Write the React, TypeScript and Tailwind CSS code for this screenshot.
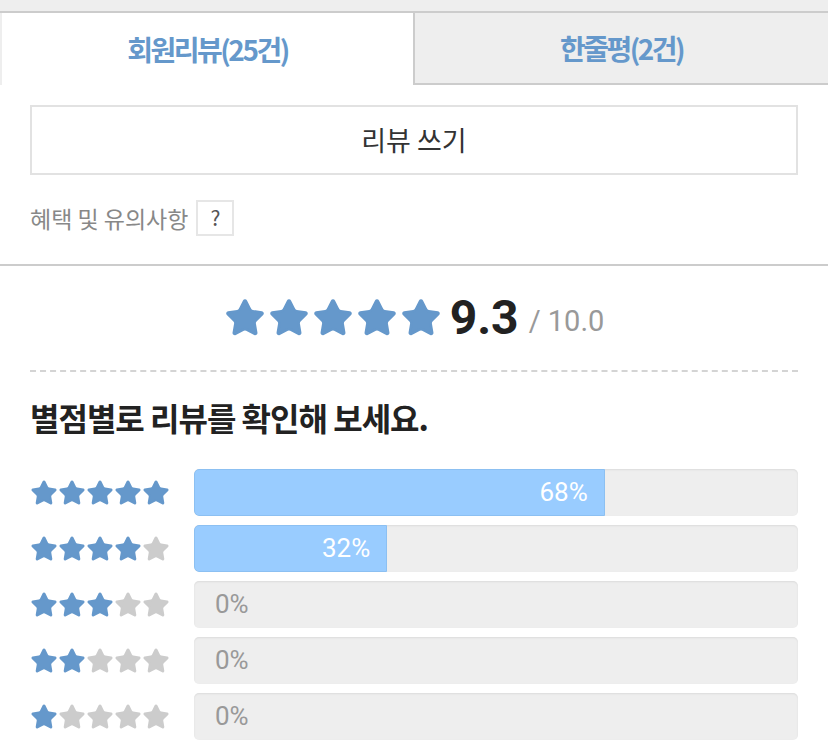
import { Star } from 'lucide-react';

const FONT = '"Noto Sans CJK KR", "Noto Sans", Roboto, sans-serif';

const rows = [
  { stars: 5, pct: 68 },
  { stars: 4, pct: 32 },
  { stars: 3, pct: 0 },
  { stars: 2, pct: 0 },
  { stars: 1, pct: 0 },
];

function StarIcon({ on, size }: { on: boolean; size: number }) {
  const color = on ? '#6598cb' : '#cccccc';
  return <Star width={size} height={size} fill={color} color={color} strokeWidth={1.5} />;
}

export default function App() {
  return (
    <div className="w-[828px] bg-white" style={{ fontFamily: FONT }}>
      <div className="h-[11px] bg-[#eeeeee]" />
      <div className="flex border-t-2 border-[#cccccc]">
        <div className="flex h-[72px] w-[413px] items-center justify-center border-l-2 border-[#eeeeee] bg-white">
          <span className="text-[28px] font-bold tracking-[-2.5px] text-[#6598cb]">회원리뷰(25건)</span>
        </div>
        <div className="flex h-[72px] flex-1 items-center justify-center border-b-2 border-l-2 border-[#cccccc] bg-[#eeeeee]">
          <span className="text-[28px] font-bold tracking-[-2.5px] text-[#6598cb]">한줄평(2건)</span>
        </div>
      </div>

      <div className="px-[30px] pt-[20px]">
        <button className="flex h-[70px] w-full items-center justify-center border-2 border-[#e2e2e2] bg-white text-[27px] text-[#333333]">
          리뷰 쓰기
        </button>
        <div className="mt-[25px] flex h-[36px] items-center gap-[8px]">
          <span className="text-[23px] text-[#888888]">혜택 및 유의사항</span>
          <span className="flex h-[36px] w-[38px] items-center justify-center border-2 border-[#e6e6e6] text-[21px] text-[#555555]">?</span>
        </div>
      </div>

      <div className="mt-[28px] border-t-2 border-[#cccccc]" />

      <div className="px-[30px]">
        <div className="flex h-[104px] items-center justify-center">
          <div className="flex gap-[2px]">
            {[0, 1, 2, 3, 4].map((i) => (
              <StarIcon key={i} on size={42} />
            ))}
          </div>
          <span className="ml-[8px] text-[48px] font-bold text-[#222222]" style={{ fontFamily: 'Roboto, sans-serif' }}>9.3</span>
          <span className="ml-[10px] mt-[8px] text-[29px] text-[#999999]" style={{ fontFamily: 'Roboto, sans-serif' }}>/ 10.0</span>
        </div>
        <div className="border-t-2 border-dashed border-[#d4d4d4]" />
        <h2 className="mb-[28px] mt-[21px] h-[48px] text-[32px] font-bold leading-[48px] tracking-[-1px] text-[#222222]">별점별로 리뷰를 확인해 보세요.</h2>

        <div className="flex flex-col gap-[9px]">
          {rows.map((r) => (
            <div key={r.stars} className="flex items-center">
              <div className="flex w-[164px]">
                {[1, 2, 3, 4, 5].map((i) => (
                  <StarIcon key={i} on={i <= r.stars} size={28} />
                ))}
              </div>
              <div className="relative h-[47px] flex-1 overflow-hidden rounded-[5px] bg-[#eeeeee] shadow-[inset_0_1px_2px_rgba(0,0,0,0.08)]">
                {r.pct > 0 ? (
                  <div
                    className="flex h-full items-center justify-end rounded-l-[5px] border border-[#8cc0f2] bg-[#99ccff] pr-[16px]"
                    style={{ width: `${r.pct}%` }}
                  >
                    <span className="text-[26px] text-white" style={{ fontFamily: 'Roboto, sans-serif' }}>{r.pct}%</span>
                  </div>
                ) : (
                  <div className="flex h-full items-center pl-[21px]">
                    <span className="text-[26px] text-[#999999]" style={{ fontFamily: 'Roboto, sans-serif' }}>0%</span>
                  </div>
                )}
              </div>
            </div>
          ))}
        </div>
      </div>
    </div>
  );
}
